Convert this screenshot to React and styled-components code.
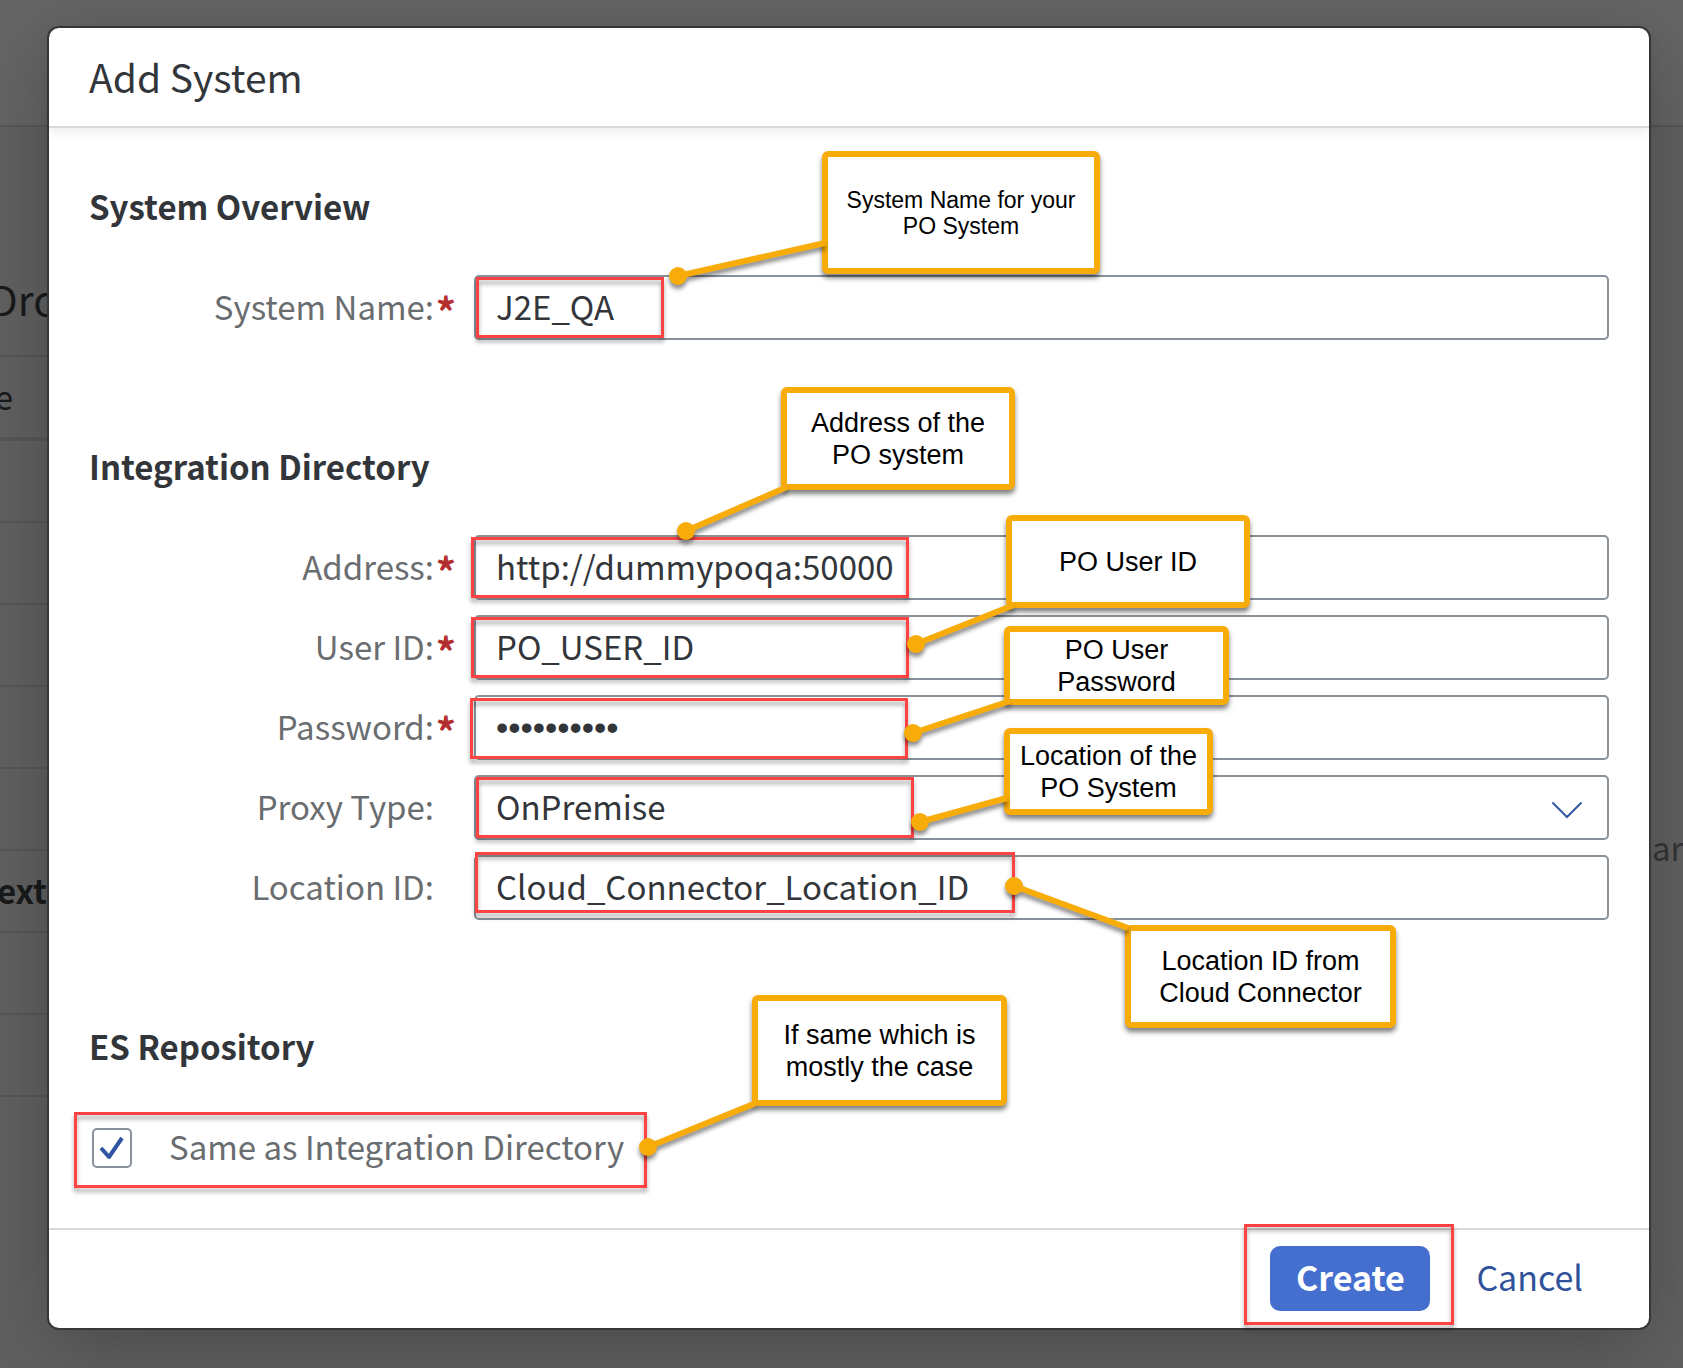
import React from "react";
import styled, { createGlobalStyle } from "styled-components";

const GlobalStyle = createGlobalStyle`
  *, *::before, *::after { box-sizing: border-box; }
  body {
    margin: 0;
    background: #666;
    color: #32363a;
    font-family: "Noto Sans CJK SC", "Noto Sans", sans-serif;
    font-size: 33px;
    line-height: 40px;
  }
`;

const Page = styled.div`
  position: relative;
  min-height: 100vh;
  overflow: hidden;
`;

/* Dimmed page behind the dialog */

const Backdrop = styled.div`
  position: absolute;
  inset: 0;
  background: #616161;
  color: #191a1b;
`;

const BackdropBar = styled.div`
  height: 127px;
  background: #656565;
  border-bottom: 2px solid #575757;
`;

const BackdropColumns = styled.div`
  display: flex;
  justify-content: space-between;
`;

const BackdropTable = styled.div`
  width: 60px;
`;

const BackdropCell = styled.div`
  display: flex;
  align-items: ${(p) => p.$align || "center"};
  justify-content: flex-end;
  height: ${(p) => p.$height || 82}px;
  padding: 0 ${(p) => p.$inset || 0}px 3px 0;
  border-bottom: ${(p) => p.$line || 2}px solid #575757;
  font-size: ${(p) => p.$size || 33}px;
  font-weight: ${(p) => (p.$bold ? 700 : 400)};
  white-space: nowrap;
`;

const BackdropTitle = styled.span`
  padding-bottom: 34px;
`;

const BackdropNote = styled.div`
  width: 31px;
  padding-top: 700px;
  color: #333536;
`;

/* Dialog */

const Overlay = styled.div`
  position: relative;
  padding: 28px 34px 40px 49px;
`;

const Dialog = styled.form`
  position: relative;
  background: #fff;
  border-radius: 10px;
  box-shadow: 0 0 0 2px #363738, 0 20px 80px rgba(0, 0, 0, 0.25);
`;

const Header = styled.header`
  display: flex;
  align-items: center;
  height: 100px;
  padding: 0 40px 2px;
  border-bottom: 2px solid #d9d9d9;
  box-shadow: 0 4px 10px rgba(0, 0, 0, 0.08);
`;

const Title = styled.h1`
  margin: 0;
  font-size: 39px;
  font-weight: 400;
`;

const Body = styled.div`
  display: flex;
  flex-direction: column;
  gap: 106px;
  padding: 58px 40px 48px;
`;

const Section = styled.section`
  display: flex;
  flex-direction: column;
  gap: 49px;
`;

const SectionTitle = styled.h2`
  margin: 0;
  font-size: 33px;
  font-weight: 700;
`;

const Fields = styled.div`
  display: flex;
  flex-direction: column;
  gap: 15px;
`;

const FieldRow = styled.div`
  display: grid;
  grid-template-columns: 367px 1fr;
  column-gap: 18px;
  align-items: center;
`;

const Label = styled.label`
  display: flex;
  justify-content: flex-end;
  padding-bottom: 3px;
  color: #6a6d70;
`;

const Marker = styled.span`
  width: 22px;
  height: 40px;
  color: #b3302f;
  font-size: 40px;
  font-weight: 700;
  line-height: 50px;
  text-align: right;
`;

const Input = styled.input`
  width: 100%;
  height: 65px;
  padding: 0 20px 3px;
  border: 2px solid #89919a;
  border-radius: 5px;
  background: #fff;
  color: #32363a;
  font: inherit;
  outline: none;

  &[type="password"] {
    padding-bottom: 0;
    font-family: "Liberation Sans", sans-serif;
    font-size: 35px;
  }
`;

const SelectBox = styled.div`
  display: grid;
  align-items: center;

  > * { grid-area: 1 / 1; }
  > svg { justify-self: end; margin: 4px 26px 0 0; pointer-events: none; }
`;

const Select = styled.select`
  appearance: none;
  width: 100%;
  height: 65px;
  padding: 0 20px 3px;
  border: 2px solid #89919a;
  border-radius: 5px;
  background: #fff;
  color: #32363a;
  font: inherit;
  outline: none;
`;

const CheckRow = styled.div`
  display: flex;
  align-items: center;
  gap: 37px;
  height: 65px;
  padding-left: 3px;
`;

const CheckBox = styled.span`
  display: grid;
  width: 40px;
  height: 40px;

  > * { grid-area: 1 / 1; }
  > svg { pointer-events: none; }
`;

const CheckInput = styled.input`
  appearance: none;
  width: 40px;
  height: 40px;
  margin: 0;
  border: 2px solid #89919a;
  border-radius: 5px;
  background: #fff;

  &:not(:checked) + svg { visibility: hidden; }
`;

const CheckLabel = styled.label`
  padding-bottom: 3px;
  color: #6a6d70;
`;

const Footer = styled.footer`
  display: flex;
  align-items: center;
  justify-content: flex-end;
  gap: 22px;
  height: 100px;
  padding: 0 42px 2px;
  border-top: 2px solid #d9d9d9;
`;

const Button = styled.button`
  height: 65px;
  min-width: ${(p) => (p.$primary ? 160 : 0)}px;
  padding: 0 24px 3px;
  border: 0;
  border-radius: 10px;
  background: ${(p) => (p.$primary ? "#446fcf" : "transparent")};
  color: ${(p) => (p.$primary ? "#fff" : "#2f529b")};
  font: inherit;
  font-size: 34px;
  font-weight: ${(p) => (p.$primary ? 700 : 400)};
`;

/* Annotations drawn over the dialog */

const Highlight = styled.div`
  position: absolute;
  left: ${(p) => (p.$x === undefined ? "auto" : `${p.$x}px`)};
  right: ${(p) => (p.$right === undefined ? "auto" : `${p.$right}px`)};
  top: ${(p) => p.$y}px;
  width: ${(p) => p.$w}px;
  height: ${(p) => p.$h}px;
  border: 3px solid #ff4343;
  filter: drop-shadow(0 4px 2px rgba(0, 0, 0, 0.35));
  pointer-events: none;
`;

const Leaders = styled.svg`
  position: absolute;
  left: 0;
  top: 0;
  overflow: visible;
  filter: drop-shadow(0 4px 2px rgba(0, 0, 0, 0.45));
  pointer-events: none;
`;

const Callout = styled.div`
  position: absolute;
  left: ${(p) => p.$x}px;
  top: ${(p) => p.$y}px;
  width: ${(p) => p.$w}px;
  height: ${(p) => p.$h}px;
  display: flex;
  align-items: center;
  justify-content: center;
  border: 6px solid #f8ac0a;
  border-radius: 6px;
  background: #fff;
  box-shadow: 0 4px 5px rgba(0, 0, 0, 0.5);
  color: #000;
  font-family: "Liberation Sans", Arial, sans-serif;
  font-size: ${(p) => (p.$small ? 23 : 27)}px;
  line-height: ${(p) => (p.$small ? 26 : 32)}px;
  text-align: center;
  white-space: pre-line;
`;

const directoryFields = [
  { id: "address", label: "Address:", required: true, value: "http://dummypoqa:50000" },
  { id: "user", label: "User ID:", required: true, value: "PO_USER_ID" },
  { id: "password", label: "Password:", required: true, value: "dummypass1", type: "password" },
  { id: "proxy", label: "Proxy Type:", options: ["OnPremise", "Internet"] },
  { id: "location", label: "Location ID:", value: "Cloud_Connector_Location_ID" },
];

const highlights = [
  { x: 476, y: 277, w: 188, h: 61 },
  { x: 471, y: 537, w: 438, h: 61 },
  { x: 471, y: 617, w: 438, h: 61 },
  { x: 470, y: 698, w: 438, h: 61 },
  { x: 476, y: 777, w: 438, h: 61 },
  { x: 475, y: 852, w: 540, h: 61 },
  { x: 74, y: 1112, w: 573, h: 76 },
  { right: 229, y: 1224, w: 210, h: 101 },
];

const callouts = [
  { x: 822, y: 151, w: 278, h: 123, from: [678, 276], to: [825, 243], text: "System Name for your\nPO System", small: true },
  { x: 781, y: 387, w: 234, h: 103, from: [686, 531], to: [787, 487], text: "Address of the\nPO system" },
  { x: 1006, y: 515, w: 244, h: 93, from: [916, 644], to: [1014, 605], text: "PO User ID" },
  { x: 1004, y: 626, w: 225, h: 79, from: [913, 733], to: [1010, 701], text: "PO User\nPassword" },
  { x: 1004, y: 728, w: 209, h: 87, from: [920, 822], to: [1007, 798], text: "Location of the\nPO System" },
  { x: 1125, y: 925, w: 271, h: 103, from: [1014, 886], to: [1128, 928], text: "Location ID from\nCloud Connector" },
  { x: 752, y: 995, w: 255, h: 111, from: [648, 1147], to: [756, 1103], text: "If same which is\nmostly the case" },
];

function Field({ id, label, required, value, type = "text", options }) {
  return (
    <FieldRow>
      <Label htmlFor={id}>
        {label}
        <Marker>{required ? "*" : ""}</Marker>
      </Label>
      {options ? (
        <SelectBox>
          <Select id={id} defaultValue={options[0]}>
            {options.map((o) => (
              <option key={o}>{o}</option>
            ))}
          </Select>
          <svg width="32" height="18" viewBox="0 0 32 18" fill="none" stroke="#3458a3" strokeWidth="2">
            <path d="M2 2 L16 16 L30 2" strokeLinecap="round" />
          </svg>
        </SelectBox>
      ) : (
        <Input id={id} type={type} defaultValue={value} autoComplete="off" spellCheck={false} />
      )}
    </FieldRow>
  );
}

export default function App() {
  return (
    <Page>
      <GlobalStyle />
      <Backdrop aria-hidden="true">
        <BackdropBar />
        <BackdropColumns>
          <BackdropTable>
            <BackdropCell $height={230} $size={41} $inset={2} $align="flex-end">
              <BackdropTitle>Dro</BackdropTitle>
            </BackdropCell>
            <BackdropCell $height={84} $line={4} $inset={47}>e</BackdropCell>
            <BackdropCell />
            <BackdropCell />
            <BackdropCell />
            <BackdropCell />
            <BackdropCell />
            <BackdropCell $bold $inset={13}>ext</BackdropCell>
            <BackdropCell />
            <BackdropCell />
          </BackdropTable>
          <BackdropNote>ar</BackdropNote>
        </BackdropColumns>
      </Backdrop>
      <Overlay>
        <Dialog role="dialog" aria-labelledby="dialog-title" onSubmit={(e) => e.preventDefault()}>
          <Header>
            <Title id="dialog-title">Add System</Title>
          </Header>
          <Body>
            <Section>
              <SectionTitle>System Overview</SectionTitle>
              <Fields>
                <Field id="name" label="System Name:" required value="J2E_QA" />
              </Fields>
            </Section>
            <Section>
              <SectionTitle>Integration Directory</SectionTitle>
              <Fields>
                {directoryFields.map((f) => (
                  <Field key={f.id} {...f} />
                ))}
              </Fields>
            </Section>
            <Section>
              <SectionTitle>ES Repository</SectionTitle>
              <CheckRow>
                <CheckBox>
                  <CheckInput type="checkbox" id="same" defaultChecked />
                  <svg width="40" height="40" viewBox="0 0 40 40" fill="none" stroke="#2f55a3" strokeWidth="4">
                    <path d="M9 20 L17 29 L30 10" strokeLinejoin="round" />
                  </svg>
                </CheckBox>
                <CheckLabel htmlFor="same">Same as Integration Directory</CheckLabel>
              </CheckRow>
            </Section>
          </Body>
          <Footer>
            <Button $primary type="submit">Create</Button>
            <Button type="button">Cancel</Button>
          </Footer>
        </Dialog>
      </Overlay>
      {highlights.map((h) => (
        <Highlight key={h.y} $x={h.x} $right={h.right} $y={h.y} $w={h.w} $h={h.h} />
      ))}
      {callouts.map((c) => (
        <React.Fragment key={c.text}>
          <Callout $x={c.x} $y={c.y} $w={c.w} $h={c.h} $small={c.small}>{c.text}</Callout>
          <Leaders width="1" height="1" stroke="#f8ac0a" fill="#f8ac0a">
            <line x1={c.from[0]} y1={c.from[1]} x2={c.to[0]} y2={c.to[1]} strokeWidth="6" />
            <circle cx={c.from[0]} cy={c.from[1]} r="9" stroke="none" />
          </Leaders>
        </React.Fragment>
      ))}
    </Page>
  );
}
